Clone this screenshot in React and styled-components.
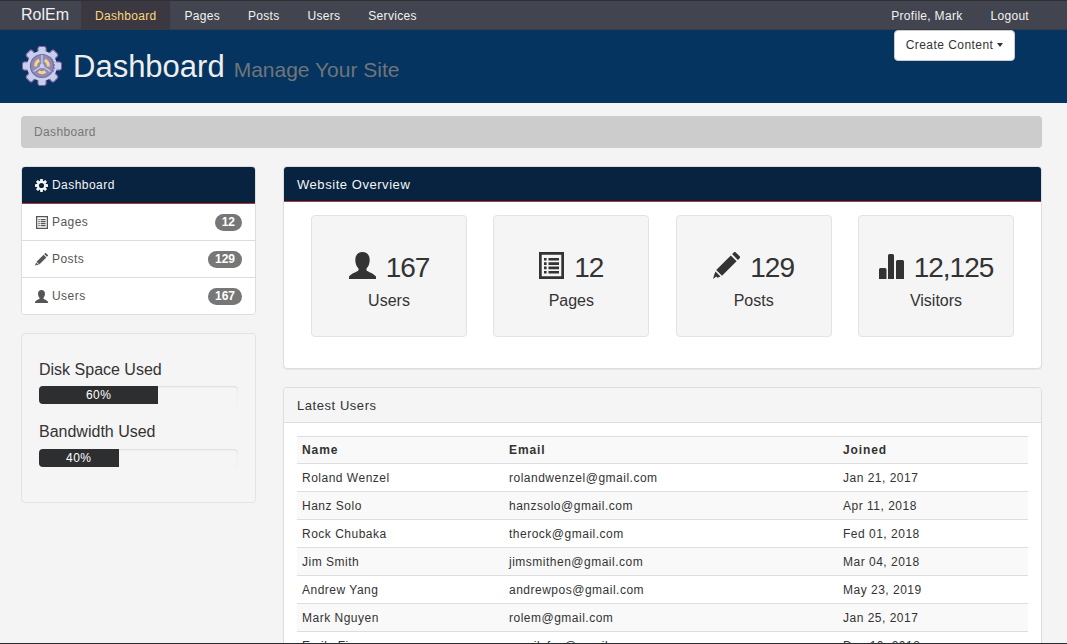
import React from 'react';
import styled, { createGlobalStyle } from 'styled-components';

const GlobalStyle = createGlobalStyle`
  html, body {
    margin: 0;
    height: 100%;
    overflow: hidden;
    background: #f4f4f4;
  }
  body {
    font-family: "Liberation Sans", Arial, sans-serif;
    font-size: 12px;
    letter-spacing: 0.45px;
    color: #333;
  }
  * { box-sizing: border-box; }
`;

const users = [
  ['Roland Wenzel', 'rolandwenzel@gmail.com', 'Jan 21, 2017'],
  ['Hanz Solo', 'hanzsolo@gmail.com', 'Apr 11, 2018'],
  ['Rock Chubaka', 'therock@gmail.com', 'Fed 01, 2018'],
  ['Jim Smith', 'jimsmithen@gmail.com', 'Mar 04, 2018'],
  ['Andrew Yang', 'andrewpos@gmail.com', 'May 23, 2019'],
  ['Mark Nguyen', 'rolem@gmail.com', 'Jan 25, 2017'],
  ['Emily Fierro', 'emailyfox@gmail.com', 'Dec 10, 2018'],
];

const UserIcon = ({ size = 12, color = 'currentColor' }) => (
  <svg width={size} height={size} viewBox="0 0 27 27" fill={color}>
    <path d="M13.500 0c4.500 0 7.200 3.200 7.200 8 0 3.600-1.200 6.600-3 8.200-.4.400-.4 1.600 0 2.200 1 1.200 7 3 9.300 6V27H0v-2.600c2.300-3 8.300-4.800 9.300-6 .4-.6.4-1.800 0-2.200-1.800-1.600-3-4.600-3-8.200C6.300 3.200 9 0 13.500 0z" />
  </svg>
);

const ListIcon = ({ size = 12, color = 'currentColor' }) => (
  <svg width={(size * 25) / 27} height={size} viewBox="0 0 25 27" fill={color}>
    <path
      fillRule="evenodd"
      d="M0 0h25v27H0zM2.700 2.700v21.600h19.600V2.700zM5 6h2.600v2.600H5zM9.500 6H20v2.600H9.500zM5 10.300h2.600v2.600H5zM9.500 10.300H20v2.600H9.500zM5 14.600h2.600v2.600H5zM9.500 14.600H20v2.600H9.500zM5 18.900h2.600v2.600H5zM9.500 18.900H20v2.600H9.500z"
    />
  </svg>
);

const PencilIcon = ({ size = 12, color = 'currentColor' }) => (
  <svg width={size} height={size} viewBox="0 0 27 27" fill={color}>
    <path d="M22.800 0.400l3.800 3.800a1.400 1.400 0 0 1 0 2l-1.700 1.700-5.800-5.800 1.700-1.700a1.400 1.400 0 0 1 2 0zM17.800 3.400l5.800 5.800L9 23.800l-5.800-5.800zM2.500 19.500l5 5-3 1.200-1.200-1.200L0 27l1.300-4.500z" />
  </svg>
);

const StatsIcon = ({ size = 12, color = 'currentColor' }) => (
  <svg width={(size * 25) / 27} height={size} viewBox="0 0 25 27" fill={color}>
    <path d="M1.500 16h4.500a1.500 1.500 0 0 1 1.500 1.500V27H0v-9.500A1.500 1.500 0 0 1 1.500 16zM10.500 2h3a1.500 1.500 0 0 1 1.500 1.500V27H9V3.500A1.500 1.500 0 0 1 10.500 2zM18.500 8h5A1.500 1.500 0 0 1 25 9.500V27h-8V9.500A1.500 1.500 0 0 1 18.500 8z" />
  </svg>
);

const CogIcon = ({ size = 12, color = 'currentColor' }) => (
  <svg width={size} height={size} viewBox="0 0 28 28">
    <g fill={color}>
      <circle cx="14" cy="14" r="10" />
      <rect x="11" y="0" width="6" height="28" rx="1" />
      <rect x="0" y="11" width="28" height="6" rx="1" />
      <rect x="11" y="0" width="6" height="28" rx="1" transform="rotate(45 14 14)" />
      <rect x="11" y="0" width="6" height="28" rx="1" transform="rotate(-45 14 14)" />
    </g>
    <circle cx="14" cy="14" r="5.500" fill="#072340" />
  </svg>
);

const GearLogo = () => {
  const teeth = [0, 45, 90, 135, 180, 225, 270, 315];
  return (
    <svg width="40" height="40" viewBox="0 0 40 40">
      {teeth.map((a) => (
        <rect
          key={a}
          x="16"
          y="0.500"
          width="8"
          height="39"
          rx="2"
          fill="#c6d0ec"
          stroke="#7f5f9f"
          strokeWidth="1"
          transform={`rotate(${a} 20 20)`}
        />
      ))}
      <circle cx="20" cy="20" r="15" fill="#c6d0ec" />
      <circle cx="20" cy="20" r="11.500" fill="#9189b8" stroke="#7a6aa4" strokeWidth="1.200" />
      <path d="M28 10.500a13 13 0 0 1 3.500 15" fill="none" stroke="#7a6aa4" strokeWidth="1" strokeDasharray="1.500 1.500" />
      <g fill="none" stroke="#f6d77e" strokeWidth="3">
        <path d="M13.700 20.500a6.500 6.500 0 0 1 3.500-6.300" />
        <path d="M26.300 20.500a6.500 6.500 0 0 0-3.500-6.300" />
        <path d="M16.500 25.600a6.500 6.500 0 0 0 7 0" />
      </g>
      <g stroke="#c6d0ec" strokeWidth="1.300">
        <path d="M20 20V9M20 20l-8.500 5.500M20 20l8.500 5.500" />
      </g>
      <circle cx="20" cy="20" r="2.200" fill="#c6d0ec" />
    </svg>
  );
};

const Page = styled.div`
  position: relative;
  height: 644px;
  overflow: hidden;
`;

const BottomEdge = styled.div`
  position: absolute;
  left: 0;
  right: 0;
  bottom: 0;
  height: 1px;
  background: #2a2b2e;
`;

const Navbar = styled.nav`
  display: flex;
  align-items: stretch;
  height: 30px;
  padding: 0 21px;
  background: #42454f;
  border-top: 1px solid #2f3033;
  border-bottom: 1px solid #383b43;
`;

const Brand = styled.span`
  display: flex;
  align-items: center;
  margin-right: 12px;
  font-size: 16px;
  letter-spacing: 0;
  color: #f0f0f0;
`;

const NavLink = styled.a`
  display: flex;
  align-items: center;
  padding: 1px 14px 0;
  letter-spacing: 0.3px;
  color: ${(p) => (p.$active ? '#f8d77f' : '#f2f2f2')};
  background: ${(p) => (p.$active ? '#3b3841' : 'transparent')};
`;

const NavRight = styled.div`
  display: flex;
  margin-left: auto;
  margin-right: 3px;
`;

const Hero = styled.header`
  display: flex;
  justify-content: space-between;
  height: 73px;
  padding: 0 52px 0 22px;
  background: #04345f;
`;

const HeroTitle = styled.div`
  display: flex;
  align-items: center;
  height: 73px;
  padding-bottom: 2px;
`;

const Title = styled.h1`
  margin: 2px 0 0 11px;
  font-size: 31px;
  font-weight: 400;
  letter-spacing: 0;
  color: #eeeeee;
`;

const Subtitle = styled.small`
  margin: 9px 0 0 9px;
  font-size: 21px;
  letter-spacing: 0;
  color: #70757a;
`;

const CreateButton = styled.button`
  height: 31px;
  width: 121px;
  padding: 0 0 2px;
  font: inherit;
  letter-spacing: 0.45px;
  color: #333;
  background: #fff;
  border: 1px solid #ccc;
  border-radius: 4px;
`;

const Caret = styled.span`
  display: inline-block;
  margin-left: 4px;
  vertical-align: middle;
  border-top: 4px solid #333;
  border-left: 3px solid transparent;
  border-right: 3px solid transparent;
`;

const Crumb = styled.div`
  display: flex;
  align-items: center;
  height: 32px;
  margin: 13px 25px 18px 21px;
  padding: 0 13px;
  letter-spacing: 0.35px;
  color: #777;
  background: #cccccc;
  border-radius: 4px;
`;

const Columns = styled.div`
  display: grid;
  grid-template-columns: 235px 759px;
  column-gap: 27px;
  padding-left: 21px;
  align-items: start;
`;

const Sidebar = styled.aside`
  display: flex;
  flex-direction: column;
  gap: 18px;
`;

const Menu = styled.div`
  background: #fff;
  border: 1px solid #ddd;
  border-radius: 4px;
  overflow: hidden;
`;

const MenuItem = styled.a`
  display: flex;
  align-items: center;
  height: ${(p) => (p.$active ? '38px' : '37px')};
  padding: 0 13px;
  color: ${(p) => (p.$active ? '#f5f5f5' : '#555')};
  background: ${(p) => (p.$active ? '#072340' : '#fff')};
  border: ${(p) => (p.$active ? '1px solid #b0392f' : '0')};
  border-bottom: 1px solid ${(p) => (p.$active ? '#b0392f' : '#ddd')};
  margin: ${(p) => (p.$active ? '-1px -1px 0' : '0')};
  &:last-child { border-bottom: 0; height: 36px; }
`;

const IconSlot = styled.span`
  display: flex;
  justify-content: flex-end;
  width: 13px;
  margin-right: 4px;
`;

const Badge = styled.span`
  margin-left: auto;
  padding: 0 7px;
  height: 17px;
  line-height: 17px;
  font-weight: 700;
  letter-spacing: 0;
  color: #fff;
  background: #777;
  border-radius: 9px;
`;

const Well = styled.div`
  height: 170px;
  padding: 27px 17px 0;
  background: #f5f5f5;
  border: 1px solid #e3e3e3;
  border-radius: 4px;
`;

const MeterLabel = styled.div`
  height: 18px;
  line-height: 18px;
  margin-bottom: ${(p) => p.$gap || 7}px;
  font-size: 16px;
  letter-spacing: 0;
`;

const Track = styled.div`
  height: 18px;
  margin-bottom: 19px;
  background: #f5f5f5;
  border-radius: 4px;
  box-shadow: inset 0 1px 2px rgba(0, 0, 0, 0.1);
  overflow: hidden;
`;

const Fill = styled.div`
  height: 18px;
  line-height: 18px;
  text-align: center;
  color: #fff;
  background: #2d2e30;
`;

const Main = styled.main`
  display: flex;
  flex-direction: column;
  gap: 18px;
`;

const Panel = styled.section`
  background: #fff;
  border: 1px solid #ddd;
  border-radius: 4px;
  box-shadow: 0 1px 1px rgba(0, 0, 0, 0.05);
`;

const PanelHead = styled.div`
  display: flex;
  align-items: center;
  height: 35px;
  padding: 0 13px;
  font-size: 13px;
  letter-spacing: 0.55px;
  color: ${(p) => (p.$dark ? '#f5f5f5' : '#333')};
  background: ${(p) => (p.$dark ? '#072340' : '#f5f5f5')};
  border-bottom: 1px solid ${(p) => (p.$dark ? '#b0392f' : '#ddd')};
  border-radius: 3px 3px 0 0;
`;

const StatGrid = styled.div`
  display: grid;
  grid-template-columns: repeat(4, 156px);
  justify-content: space-between;
  height: 166px;
  padding: 13px 27px 0;
`;

const StatCard = styled.div`
  display: flex;
  flex-direction: column;
  align-items: center;
  height: 122px;
  padding-top: 36px;
  background: #f5f5f5;
  border: 1px solid #e3e3e3;
  border-radius: 4px;
`;

const StatValue = styled.div`
  display: flex;
  align-items: flex-end;
  gap: 10px;
  height: 27px;
  font-size: 28px;
  line-height: 22px;
  letter-spacing: -1px;
`;

const StatLabel = styled.div`
  margin-top: 13px;
  font-size: 16px;
  letter-spacing: 0;
`;

const TableWrap = styled.div`
  padding: 13px;
`;

const Table = styled.table`
  width: 100%;
  table-layout: fixed;
  border-collapse: collapse;
`;

const Th = styled.th`
  height: 27px;
  padding: 0 5px;
  text-align: left;
  letter-spacing: 0.9px;
  width: ${(p) => p.$w || 'auto'};
  border-top: 1px solid #ddd;
  background: #f9f9f9;
`;

const Td = styled.td`
  height: 28px;
  padding: 0 5px;
  letter-spacing: 0.5px;
  border-top: 1px solid #ddd;
`;

const Row = styled.tr`
  background: ${(p) => (p.$odd ? '#f9f9f9' : '#fff')};
`;

export default function App() {
  return (
    <Page>
      <GlobalStyle />
      <Navbar>
        <Brand>RolEm</Brand>
        <NavLink $active>Dashboard</NavLink>
        <NavLink>Pages</NavLink>
        <NavLink>Posts</NavLink>
        <NavLink>Users</NavLink>
        <NavLink>Services</NavLink>
        <NavRight>
          <NavLink>Profile, Mark</NavLink>
          <NavLink>Logout</NavLink>
        </NavRight>
      </Navbar>
      <Hero>
        <HeroTitle>
          <GearLogo />
          <Title>Dashboard</Title>
          <Subtitle>Manage Your Site</Subtitle>
        </HeroTitle>
        <CreateButton>
          Create Content<Caret />
        </CreateButton>
      </Hero>
      <Crumb>Dashboard</Crumb>
      <Columns>
        <Sidebar>
          <Menu>
            <MenuItem $active><IconSlot><CogIcon size={13} color="#f5f5f5" /></IconSlot>Dashboard</MenuItem>
            <MenuItem><IconSlot><ListIcon size={13} /></IconSlot>Pages<Badge>12</Badge></MenuItem>
            <MenuItem><IconSlot><PencilIcon size={13} /></IconSlot>Posts<Badge>129</Badge></MenuItem>
            <MenuItem><IconSlot><UserIcon size={13} /></IconSlot>Users<Badge>167</Badge></MenuItem>
          </Menu>
          <Well>
            <MeterLabel>Disk Space Used</MeterLabel>
            <Track><Fill style={{ width: '60%' }}>60%</Fill></Track>
            <MeterLabel $gap={8}>Bandwidth Used</MeterLabel>
            <Track><Fill style={{ width: '40%' }}>40%</Fill></Track>
          </Well>
        </Sidebar>
        <Main>
          <Panel>
            <PanelHead $dark>Website Overview</PanelHead>
            <StatGrid>
              <StatCard>
                <StatValue><UserIcon size={27} />167</StatValue>
                <StatLabel>Users</StatLabel>
              </StatCard>
              <StatCard>
                <StatValue><ListIcon size={27} />12</StatValue>
                <StatLabel>Pages</StatLabel>
              </StatCard>
              <StatCard>
                <StatValue><PencilIcon size={27} />129</StatValue>
                <StatLabel>Posts</StatLabel>
              </StatCard>
              <StatCard>
                <StatValue><StatsIcon size={27} />12,125</StatValue>
                <StatLabel>Visitors</StatLabel>
              </StatCard>
            </StatGrid>
          </Panel>
          <Panel>
            <PanelHead>Latest Users</PanelHead>
            <TableWrap>
              <Table>
                <thead>
                  <tr>
                    <Th $w="207px">Name</Th>
                    <Th $w="334px">Email</Th>
                    <Th>Joined</Th>
                  </tr>
                </thead>
                <tbody>
                  {users.map((u, i) => (
                    <Row key={u[1]} $odd={i % 2 === 1}>
                      <Td>{u[0]}</Td>
                      <Td>{u[1]}</Td>
                      <Td>{u[2]}</Td>
                    </Row>
                  ))}
                </tbody>
              </Table>
            </TableWrap>
          </Panel>
        </Main>
      </Columns>
      <BottomEdge />
    </Page>
  );
}
